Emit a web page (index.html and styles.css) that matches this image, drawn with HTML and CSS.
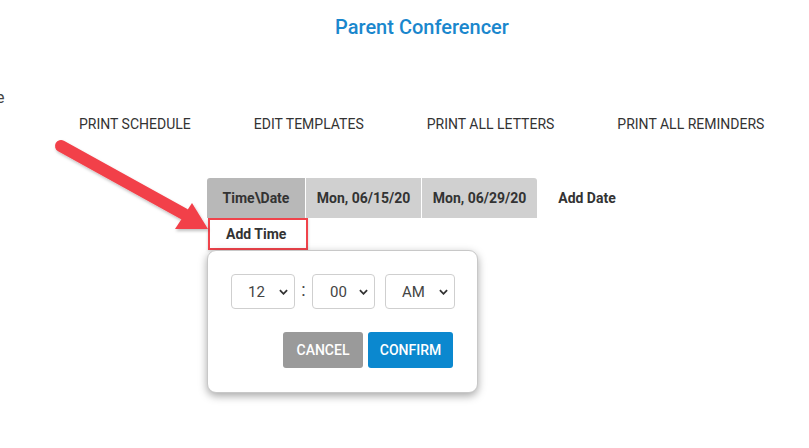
FILE: index.html
```html
<!DOCTYPE html>
<html>
<head>
<meta charset="utf-8">
<link rel="stylesheet" href="styles.css">
</head>
<body>
<div class="page">
  <h1 class="title">Parent Conferencer</h1>
  <div class="stray">e</div>
  <nav class="nav">
    <span class="nav-item">PRINT SCHEDULE</span>
    <span class="nav-item">EDIT TEMPLATES</span>
    <span class="nav-item">PRINT ALL LETTERS</span>
    <span class="nav-item">PRINT ALL REMINDERS</span>
  </nav>
  <div class="grid">
    <div class="head-row">
      <div class="cell cell-corner">Time\Date</div>
      <div class="cell cell-date">Mon, 06/15/20</div>
      <div class="cell cell-date cell-last">Mon, 06/29/20</div>
      <div class="cell cell-add">Add Date</div>
    </div>
    <div class="add-time">Add Time</div>
    <div class="popup">
      <div class="time-row">
        <div class="sel sel-h"><span>12</span><svg class="chev" viewBox="0 0 10 6" width="9" height="6"><path d="M1 1l4 4 4-4" fill="none" stroke="#333" stroke-width="2"/></svg></div>
        <span class="colon">:</span>
        <div class="sel sel-m"><span>00</span><svg class="chev" viewBox="0 0 10 6" width="9" height="6"><path d="M1 1l4 4 4-4" fill="none" stroke="#333" stroke-width="2"/></svg></div>
        <div class="sel sel-ap"><span>AM</span><svg class="chev" viewBox="0 0 10 6" width="9" height="6"><path d="M1 1l4 4 4-4" fill="none" stroke="#333" stroke-width="2"/></svg></div>
      </div>
      <div class="btn-row">
        <div class="btn btn-cancel">CANCEL</div>
        <div class="btn btn-confirm">CONFIRM</div>
      </div>
    </div>
  </div>
  <svg class="arrow" width="220" height="250" viewBox="0 0 220 250">
    <defs>
      <filter id="sh" x="-20%" y="-20%" width="140%" height="140%">
        <feDropShadow dx="1" dy="2" stdDeviation="1.5" flood-color="#000" flood-opacity="0.25"/>
      </filter>
    </defs>
    <g filter="url(#sh)">
      <line x1="61" y1="146" x2="184" y2="214" stroke="#f2404a" stroke-width="12" stroke-linecap="round"/>
      <polygon points="175,229 192,203 208,229" fill="#f2404a"/>
    </g>
  </svg>
</div>
</body>
</html>
```

FILE: styles.css
```css
html, body {
  margin: 0;
  padding: 0;
  background: #fff;
}
.page {
  position: relative;
  width: 809px;
  height: 448px;
  overflow: hidden;
  font-family: Roboto, "Liberation Sans", sans-serif;
  color: #333;
}
.title {
  margin: 0;
  padding-top: 15px;
  height: 25px;
  line-height: 25px;
  text-align: center;
  font-size: 20px;
  font-weight: 500;
  color: #1a87cd;
  padding-left: 35px;
}
.stray {
  margin: 50px 0 0 -4px;
  height: 16px;
  line-height: 16px;
  font-size: 16px;
  color: #444;
}
.nav {
  display: flex;
  gap: 63px;
  padding-left: 79px;
  margin-top: 9px;
  height: 18px;
  line-height: 18px;
  font-size: 14px;
  color: #333;
}
.grid {
  margin-left: 207px;
  margin-top: 45px;
}
.head-row {
  display: flex;
  height: 40px;
}
.cell {
  display: flex;
  align-items: center;
  justify-content: center;
  font-size: 14px;
  font-weight: 700;
  color: #333;
}
.cell-corner {
  width: 98px;
  background: #b8b8b8;
  border-top-left-radius: 3px;
}
.cell-date {
  width: 115px;
  margin-left: 1px;
  background: #d0d0d0;
}
.cell-last {
  border-top-right-radius: 3px;
}
.cell-add {
  width: 100px;
  background: #fff;
}
.add-time {
  box-sizing: border-box;
  width: 100px;
  height: 32px;
  margin-left: 1px;
  border: 2px solid #f0434b;
  font-size: 14px;
  font-weight: 700;
  line-height: 28px;
  padding-left: 16px;
  box-shadow: 0 1px 3px rgba(0,0,0,0.2);
}
.popup {
  box-sizing: border-box;
  width: 271px;
  height: 143px;
  border: 1px solid #c8c8c8;
  border-radius: 9px;
  box-shadow: 0 3px 8px rgba(0,0,0,0.35);
  padding: 23px 0 0 23px;
  background: #fff;
}
.time-row {
  display: flex;
  align-items: center;
  height: 35px;
}
.sel {
  box-sizing: border-box;
  height: 35px;
  border: 1px solid #cfcfcf;
  border-radius: 4px;
  display: flex;
  align-items: center;
  justify-content: space-between;
  font-size: 15px;
  color: #444;
}
.sel-h {
  width: 64px;
  padding: 0 6px 0 16px;
}
.sel-m {
  width: 63px;
  padding: 0 6px 0 17px;
}
.sel-ap {
  width: 70px;
  margin-left: 10px;
  padding: 0 6px 0 16px;
}
.colon {
  width: 17px;
  text-align: center;
  font-size: 18px;
  color: #444;
  position: relative;
  top: -2px;
}
.btn-row {
  display: flex;
  justify-content: flex-end;
  gap: 5px;
  margin-top: 23px;
  padding-right: 24px;
}
.btn {
  height: 36px;
  line-height: 36px;
  text-align: center;
  font-size: 14px;
  font-weight: 500;
  color: #fff;
  border-radius: 3px;
}
.btn-cancel {
  width: 80px;
  background: #9a9a9a;
}
.btn-confirm {
  width: 85px;
  background: #0b88cf;
}
.arrow {
  position: absolute;
  left: 0;
  top: 0;
}
```
